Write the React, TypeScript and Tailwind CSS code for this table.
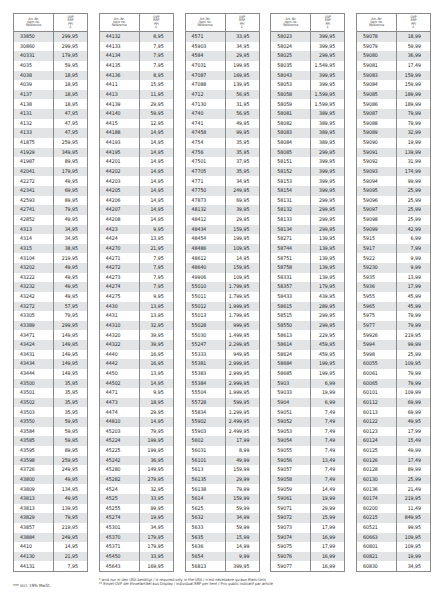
const cols = [
  `33850 299,95
30860 299,95
40331 179,95
4035 59,95
4038 18,95
4039 18,95
4137 18,95
4138 18,95
4131 47,95
4132 47,95
4133 47,95
41875 259,95
41929 349,95
41987 89,95
42041 179,95
42272 49,95
42341 69,95
42593 89,95
42741 79,95
42852 49,95
4313 34,95
4314 34,95
4315 38,95
43104 219,95
43202 49,95
43222 49,95
43232 49,95
43242 49,95
43272 57,95
43305 79,95
43389 299,95
43471 149,95
43424 149,95
43431 149,95
43434 149,95
43444 149,95
43500 35,95
43501 35,95
43502 35,95
43503 35,95
43550 59,95
43584 59,95
43585 59,95
43595 89,95
43598 259,95
43726 249,95
43800 49,95
43809 134,95
43813 49,95
43813 139,95
43829 79,95
43857 219,95
43884 249,95
4410 14,95
44130 21,95
44131 7,95`,
  `44132 8,95
44133 7,95
44134 7,95
44135 7,95
44136 8,95
4411 15,95
4413 11,95
44139 29,95
44140 59,95
4415 12,95
44188 14,95
44193 14,95
44195 14,95
44201 14,95
44202 14,95
44203 14,95
44205 14,95
44206 14,95
44207 14,95
44208 14,95
4423 9,95
4424 13,95
44270 21,95
44271 7,95
44272 7,95
44273 7,95
44274 7,95
44275 9,95
4430 13,95
4431 13,95
44310 32,95
44320 39,95
44322 39,95
4440 16,95
4442 16,95
4450 13,95
44502 14,95
4471 9,95
4473 18,95
4474 29,95
44810 14,95
45203 79,95
45224 199,95
45225 199,95
45242 36,95
45280 149,95
45282 279,95
4524 32,95
4525 33,95
45255 99,95
45274 19,95
45301 34,95
45370 179,95
45371 179,95
45450 33,95
45643 169,95`,
  `4571 33,95
45903 34,95
4584 29,95
47031 199,95
47087 169,95
47088 139,95
4712 56,95
47130 31,95
4740 56,95
4741 49,95
47458 99,95
4754 35,95
4756 35,95
47501 37,95
47705 35,95
4771 34,95
47750 249,95
47873 69,95
48132 39,95
48412 29,95
48434 159,95
48454 199,95
48486 109,95
48612 14,95
48640 159,95
49906 109,95
55010 1.799,95
55011 1.799,95
55012 1.999,95
55013 1.799,95
55028 999,95
55030 1.499,95
55247 2.299,95
55333 949,95
55381 2.999,95
55383 2.999,95
55384 2.999,95
55504 1.999,95
55728 599,95
55834 1.299,95
55902 2.499,95
55903 2.499,95
5602 17,99
56031 8,99
56101 49,99
5613 159,99
56135 29,99
56138 79,99
5614 159,99
5625 59,99
5632 34,99
5633 59,99
5635 15,99
5636 14,99
5654 9,99
56813 399,95`,
  `58023 399,95
58024 399,95
58025 299,95
58035 1.549,95
58043 399,95
58053 399,95
58058 1.599,95
58059 1.599,95
58081 389,95
58082 389,95
58083 389,95
58084 389,95
58085 299,95
58151 399,95
58152 399,95
58153 399,95
58154 399,95
58131 299,95
58132 299,95
58133 299,95
58134 299,95
58271 139,95
58744 139,95
58751 139,95
58758 139,95
58331 139,95
58357 179,95
58433 439,95
58615 289,95
58515 299,95
58550 299,95
58613 229,95
58614 459,95
58624 459,95
58684 199,95
58685 199,95
5903 6,99
59033 19,99
5904 6,99
59051 7,49
59052 7,49
59053 7,49
59054 7,49
59055 7,49
59056 13,49
59057 7,49
59058 7,49
59059 14,49
59061 19,99
59071 29,99
59072 15,99
59073 17,99
59074 16,99
59075 17,99
59076 16,99
59077 16,99`,
  `59078 18,99
59079 59,99
59080 36,99
59081 17,49
59083 159,99
59084 159,99
59085 189,99
59086 189,99
59087 79,99
59088 79,99
59089 32,99
59090 19,99
59091 139,99
59092 31,99
59093 174,99
59094 99,99
59095 25,99
59096 25,99
59097 25,99
59098 25,99
59099 42,99
5915 6,99
5917 7,99
5922 9,99
59230 9,99
5935 13,99
5936 17,99
5955 45,99
5965 45,99
5975 79,99
5977 79,99
59926 219,95
5994 99,99
5998 25,99
60055 109,95
60061 79,99
60065 79,99
60101 109,99
60112 69,99
60113 69,99
60122 49,95
60123 17,99
60124 15,49
60125 49,99
60126 17,49
60128 89,99
60130 25,99
60136 21,49
60174 219,95
60200 11,49
60215 849,95
60521 99,95
60663 109,95
60801 109,95
60821 19,99
60830 34,95`,
].map((c) => c.split("\n").map((l) => l.split(" ")));

const font = { fontFamily: '"Liberation Sans Narrow", "DejaVu Sans Condensed", "Liberation Sans", sans-serif' };

function PriceTable({ rows }: { rows: string[][] }) {
  return (
    <div className="border border-[#8a8a8a] bg-white">
      <div className="flex h-[18px] border-b border-[#8a8a8a]">
        <div className="flex w-[55%] flex-col items-center justify-center border-r border-[#8a8a8a] text-[3.4px] leading-[2.8px] text-[#3a3a3a]">
          <span>Art.-Nr.</span>
          <span>Item no.</span>
          <span>Référence</span>
        </div>
        <div className="flex flex-1 flex-col items-center justify-center text-[3.4px] leading-[3.3px] text-[#3a3a3a]">
          <span>UVP</span>
          <span>RRP</span>
          <span>PPI</span>
          <span>€</span>
        </div>
      </div>
      {rows.map(([nr, price], i) => (
        <div
          key={i}
          className={`flex h-[9.64px] items-center text-[5.2px] leading-none text-[#1c1c1c] ${i % 2 === 0 ? "bg-[#e2e4e6]" : "bg-white"}`}
        >
          <div className="flex h-full w-[55%] items-center border-r border-[#8a8a8a] pl-[6px]">{nr}</div>
          <div className="flex-1 pr-[9px] text-right">{price}</div>
        </div>
      ))}
    </div>
  );
}

export default function App() {
  return (
    <div className="h-[599px] w-[445px] overflow-hidden bg-white" style={font}>
      <div className="grid grid-cols-5 gap-x-[10.75px] pl-[13px] pr-[14px] pt-[13px]">
        {cols.map((rows, i) => (
          <PriceTable key={i} rows={rows} />
        ))}
      </div>
      <div className="mt-[6px] grid grid-cols-5 gap-x-[10.75px] pl-[13px] pr-[14px] text-[#3a3a3a]">
        <div className="pt-[6px] text-[4.3px] leading-[4px]">*** incl. 19% MwSt.</div>
        <div className="col-span-4 whitespace-nowrap text-[3.9px] leading-[4px]">
          <div>* wird nur in den USA benötigt / is required only in the USA / n'est nécessaire qu'aux États-Unis</div>
          <div>** Einzel-UVP der Einzelartikel aus Display / individual RRP per item / Prix public indicatif par article</div>
        </div>
      </div>
    </div>
  );
}
